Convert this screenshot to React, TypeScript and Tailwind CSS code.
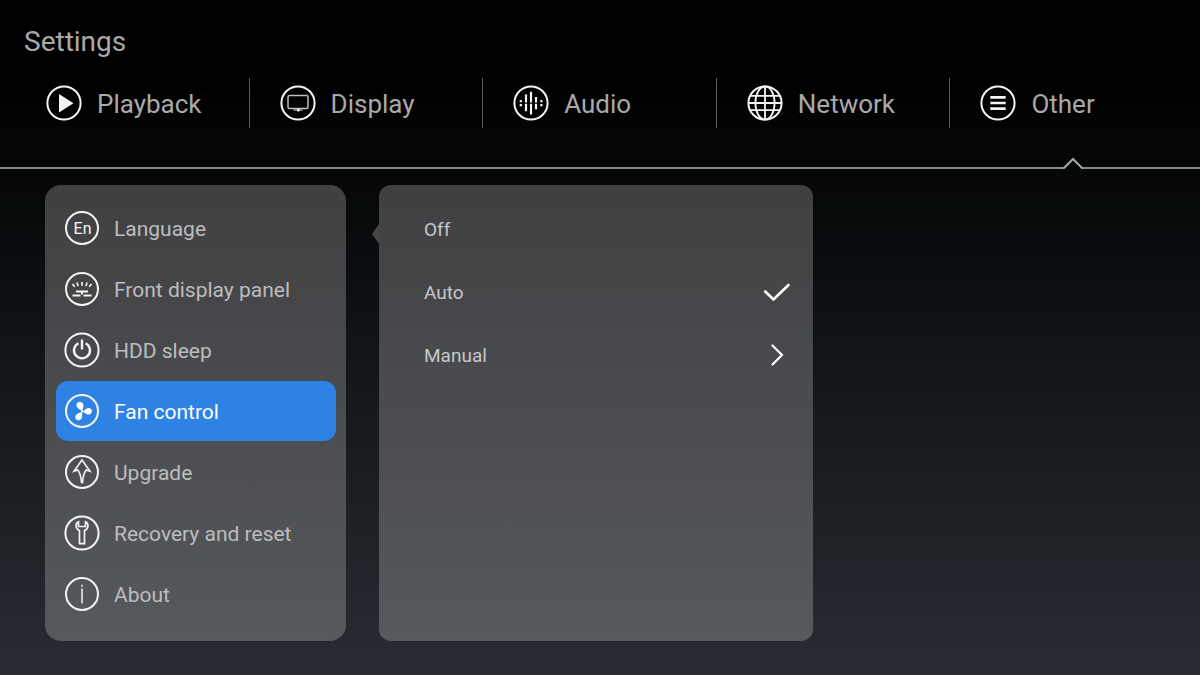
import { ReactNode, useState } from "react";

type TItem = { label: string; icon: ReactNode };

const Ring = ({ r = 16, children }: { r?: number; children?: ReactNode }) => (
  <svg
    viewBox="0 0 36 36"
    className="size-9 shrink-0"
    fill="none"
    stroke="#f4f4f4"
    strokeWidth="1.5"
    aria-hidden="true"
  >
    <circle cx="18" cy="18" r={r} strokeWidth="2" />
    {children}
  </svg>
);

const tabs: TItem[] = [
  {
    label: "Playback",
    icon: (
      <Ring r={16.6}>
        <path d="M13 9v18.4L27.5 18.2Z" fill="#f4f4f4" stroke="none" />
      </Ring>
    ),
  },
  {
    label: "Display",
    icon: (
      <Ring r={16.6}>
        <rect x="8" y="10.5" width="20" height="13" rx="1.5" stroke="#bdbdbd" />
        <path d="M13.5 25h9" stroke="#9d9d9d" />
        <path d="M17 25.2h2.5" strokeWidth="2.4" />
      </Ring>
    ),
  },
  {
    label: "Audio",
    icon: (
      <Ring r={16.6}>
        <path
          d="M18 6.8v10.6M18 18.8v10.6M13 9.5v7.9M13 18.8v7.4M23 12v5.4M23 18.8v5.4"
          strokeWidth="2.2"
        />
        <path
          d="M7.8 15v2.2M7.8 19v2.2M28.4 15v2.2M28.4 19v2.2"
          strokeWidth="2.2"
        />
      </Ring>
    ),
  },
  {
    label: "Network",
    icon: (
      <Ring r={16.6}>
        <ellipse cx="18" cy="18" rx="9.6" ry="16.6" strokeWidth="1.8" />
        <path
          d="M18 1.4v33.2M1.4 18h33.2M3.2 10.8h29.6M3.2 25.2h29.6"
          strokeWidth="1.8"
        />
      </Ring>
    ),
  },
  {
    label: "Other",
    icon: (
      <Ring r={16.6}>
        <path
          d="M10.3 12.4h15.4M10.3 18h15.4M10.3 23.7h15.4"
          strokeWidth="2.7"
        />
      </Ring>
    ),
  },
];

const menu: TItem[] = [
  {
    label: "Language",
    icon: (
      <Ring>
        <text
          x="18.5"
          y="24"
          textAnchor="middle"
          fontSize="16"
          fill="#f4f4f4"
          stroke="none"
        >
          En
        </text>
      </Ring>
    ),
  },
  {
    label: "Front display panel",
    icon: (
      <Ring>
        <path
          d="m8.5 13 2.3 2.8M13 11.5l1 3.500M18 11v3.800M23 11.5l-1 3.500M27.5 13l-2.3 2.8"
          strokeWidth="1.7"
        />
        <path
          d="M12 20.5h12M18 20.5v3M8.5 24.5h8M19.5 24.5h8"
          strokeWidth="1.9"
        />
      </Ring>
    ),
  },
  {
    label: "HDD sleep",
    icon: (
      <Ring r={16.6}>
        <path d="M14.4 11.2a8 8 0 1 0 7.2 0M18 7.5v10" strokeWidth="2.4" />
      </Ring>
    ),
  },
  {
    label: "Fan control",
    icon: (
      <Ring>
        <g fill="#ffffff" stroke="none">
          <path d="M18 17.4c-3.4-1-6-3.4-5.4-6.2.6-2.4 3.5-3.3 5.4-1.8 2.2 1.7 1.6 4.8.2 8Z" />
          <path d="M19.4 18.4c2.3-3.2 5.4-4.4 7.4-2.6 1.8 1.7 1.2 4.6-.9 5.5-2.5 1-4.7-.7-6.5-2.9Z" />
          <path d="M17.8 19.2c1 3.9.2 7.3-2.5 8-2.4.6-4.5-1.5-4-3.7.6-2.6 3.500-3.9 6.500-4.3Z" />
          <circle cx="18.3" cy="18.4" r="1.3" />
        </g>
      </Ring>
    ),
  },
  {
    label: "Upgrade",
    icon: (
      <Ring>
        <path
          d="m18 6 8 11.2-3.8-1.2c-2.3 3-3.3 7-3.7 12.5h-1c-.4-5.500-1.400-9.500-3.700-12.500l-3.800 1.200Z"
          strokeWidth="1.6"
        />
      </Ring>
    ),
  },
  {
    label: "Recovery and reset",
    icon: (
      <Ring r={16.6}>
        <path
          d="M14.5 6.8c-2 1-2.8 3-2.3 5.2.5 1.8 1.6 2.9 3.3 3.6v13h5v-13c1.7-.7 2.8-1.8 3.3-3.6.5-2.2-.3-4.2-2.3-5.2v4.7h-7Z"
          strokeWidth="1.7"
        />
      </Ring>
    ),
  },
  {
    label: "About",
    icon: (
      <Ring>
        <path d="M18 8.8v2M18 12.5v15" />
      </Ring>
    ),
  },
];

const options = ["Off", "Auto", "Manual"];

export default function App() {
  const [selected, setSelected] = useState("Fan control");
  const [mode, setMode] = useState("Auto");

  return (
    <div className="min-h-screen bg-[linear-gradient(#000000_12%,#060809_28%,#14191c_60%,#22272d_88%,#282c34)] font-[Roboto,sans-serif] text-[#a9a9a9]">
      <header className="pt-6">
        <h1 className="px-6 text-[28px] leading-9">Settings</h1>
        <nav className="mt-[18px] grid grid-cols-5 divide-x divide-[#5c5c5c] px-4">
          {tabs.map((tab) => (
            <button
              key={tab.label}
              className="flex h-[50px] items-center gap-[15px] pl-[30px] text-[26px]"
            >
              {tab.icon}
              <span className="pt-[2px]">{tab.label}</span>
            </button>
          ))}
        </nav>
        <div className="mt-[29px] flex items-end">
          <div className="h-[2px] flex-1 bg-[#84898b]" />
          <svg
            viewBox="0 0 20 12"
            className="h-3 w-5"
            fill="none"
            stroke="#a4a8aa"
            strokeWidth="2"
            aria-hidden="true"
          >
            <path d="M0 11h1l9-9 9 9h1" />
          </svg>
          <div className="h-[2px] w-[117px] bg-[#84898b]" />
        </div>
      </header>

      <main className="grid grid-cols-[301fr_434fr_354fr] gap-x-[33px] pt-4 pb-[34px] pl-[45px]">
        <ul className="flex flex-col gap-px rounded-2xl bg-linear-to-b from-[#404042] to-[#56595d] pt-[13px] pr-[10px] pb-[17px] pl-[11px]">
          {menu.map((item) => (
            <li key={item.label}>
              <button
                onClick={() => setSelected(item.label)}
                className={`flex h-[60px] w-full items-center gap-[14px] rounded-xl pl-2 text-[21px] ${
                  selected === item.label
                    ? "bg-[#2e82e4] text-white"
                    : "text-[#bcbdbe]"
                }`}
              >
                {item.icon}
                <span className="pt-[3px]">{item.label}</span>
              </button>
            </li>
          ))}
        </ul>

        <section className="relative rounded-xl bg-linear-to-b from-[#404042] to-[#56595d] pt-3">
          <svg
            viewBox="0 0 7 20"
            className="absolute top-[39px] -left-[7px] h-5 w-[7px]"
            aria-hidden="true"
          >
            <path d="M7 0 0 10l7 10Z" fill="#434546" />
          </svg>
          {options.map((option) => (
            <button
              key={option}
              onClick={() => setMode(option)}
              className="flex h-[63px] w-full items-center justify-between pr-[22px] pl-[45px] text-[19px] text-[#c6c7c8]"
            >
              <span className="pt-[3px]">{option}</span>
              <svg
                viewBox="0 0 28 28"
                className="size-7"
                fill="none"
                stroke="#ffffff"
                strokeWidth="2.6"
                strokeLinecap="round"
                aria-hidden="true"
              >
                {option === mode && <path d="m2.2 13.5 8.3 8L25.5 7" />}
                {option === "Manual" && (
                  <path d="m9.5 4.5 9.5 9.5-9.5 9.5" strokeWidth="2.2" />
                )}
              </svg>
            </button>
          ))}
        </section>
      </main>
    </div>
  );
}
